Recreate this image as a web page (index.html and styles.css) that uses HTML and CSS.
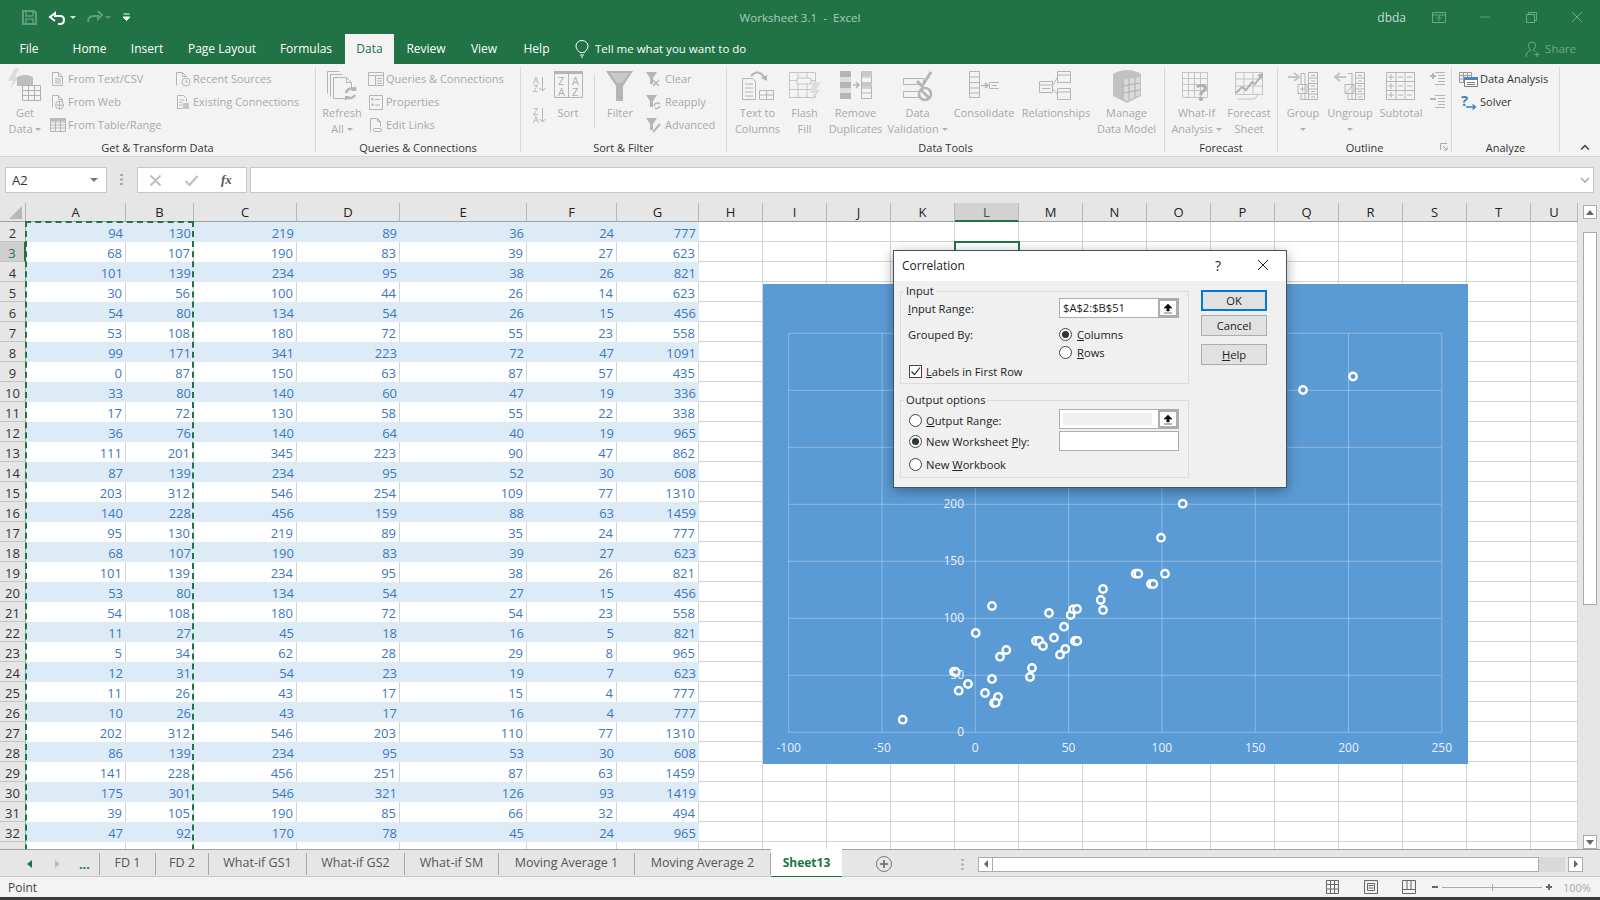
FILE: index.html
```html
<!DOCTYPE html>
<html lang="en">
<head>
  <meta charset="UTF-8">
  <title>Worksheet 3.1 - Excel</title>
  <link rel="stylesheet" href="styles.css">
</head>
<body>
  <div class="app">
    <div class="titlebar">
      <svg class="qat" width="140" height="34" viewBox="0 0 140 34">
        <g fill="none" stroke="#5f9d7c" stroke-width="2">
          <path d="M23 11h11l2 2v11H23z"/><path d="M26 11v5h7v-5M26 24v-5h7v5" stroke-width="1.5"/>
        </g>
        <path d="M52 13v-0M55 21l-5-4 5-4v3h5q4 0 4 4t-4 4h-2" fill="none" stroke="#fff" stroke-width="2"/>
        <path d="M70 16h6l-3 3z" fill="#d5e5dc"/>
        <path d="M98 11l4 4-4 4v-3h-4q-6 0-6 6" fill="none" stroke="#5f9d7c" stroke-width="2"/>
        <path d="M105 16h6l-3 3z" fill="#5f9d7c"/>
        <path d="M123.5 14h6M123 17h7l-3.500 3.500z" fill="#fff" stroke="#fff"/>
      </svg>
      <div class="doc-title">Worksheet 3.1 &nbsp;-&nbsp; Excel</div>
      <div class="window-side">
        <span class="user">dbda</span>
        <span class="winbtn"><svg width="14" height="11"><path d="M.5.5h13v10H.5zM.5 3h13M7 9V4.500M5 6.500l2-2 2 2" fill="none" stroke="#6ea88a"/></svg></span>
        <span class="winbtn"><svg width="12" height="3"><path d="M1 1h10" stroke="#5f9d7c"/></svg></span>
        <span class="winbtn"><svg width="11" height="11"><path d="M.5 2.500h8v8h-8zM2.500 2.500v-2h8v8h-2" fill="none" stroke="#6ea88a"/></svg></span>
        <span class="winbtn"><svg width="12" height="12"><path d="M1 1l10 10M11 1L1 11" stroke="#6ea88a"/></svg></span>
      </div>
    </div>

    <nav class="menutabs">
      <span>File</span><span>Home</span><span>Insert</span><span>Page Layout</span>
      <span class="formulas">Formulas</span><span class="on">Data</span><span>Review</span><span>View</span><span>Help</span>
      <span class="tellme">
        <svg width="14" height="18" viewBox="0 0 14 18"><path d="M4.500 12.500C3 10 1 9 1 6a6 5.500 0 0 1 12 0c0 3-2 4-3.500 6.500zM5 15h4M6 17h2" fill="none" stroke="#fff"/></svg>
        Tell me what you want to do
      </span>
      <span class="share">
        <svg width="16" height="18" viewBox="0 0 16 18"><path d="M1 17c0-4 2-6 5-7-2-1-2.500-3-2.500-4.500a3.500 3.500 0 0 1 7 0c0 1.500-.5 3.500-2.500 4.500 1 .3 2 1 2.500 1.500M12 12v5M9.500 14.500h5" fill="none" stroke="#6ea88a"/></svg>
        Share
      </span>
    </nav>

    <div class="ribbon">
      <section class="group g-get">
        <div class="body">
          <div class="big">
            <svg width="34" height="36" viewBox="0 0 34 36">
              <path d="M7 0L0 13h5l-3 8 9-12H7l4-9z" fill="#dcdcdc"/>
              <path d="M9 9q8-4 16 0v9H9z" fill="#bdbdbd"/>
              <path d="M14.500 17.500h18v15h-18zM14.500 22.500h18M14.500 27.500h18M20.500 17.500v15M26.500 17.500v15" fill="#f3f3f3" stroke="#b0b0b0"/>
            </svg>
            <span>Get</span><span>Data <i class="caret"></i></span>
          </div>
          <div class="stack">
            <div class="small"><svg width="16" height="16"><path d="M2.500 1.500h6l4 4v9h-10zM8.500 1.500v4h4M5 8h6M5 10h6M5 12h6" fill="none" stroke="#b5b5b5"/></svg>From Text/CSV</div>
            <div class="small"><svg width="16" height="16"><path d="M2.500 13.500v-12h6l4 4v2M8.500 1.500v4h4" fill="none" stroke="#b5b5b5"/><circle cx="9.500" cy="11" r="4" fill="#f3f3f3" stroke="#b5b5b5"/><path d="M5.500 11h8M9.500 7v8" stroke="#b5b5b5"/></svg>From Web</div>
            <div class="small"><svg width="16" height="16"><path d="M.5 1.500h15v13H.5zM.5 5h15M.5 8h15M.5 11h15M5.500 1.500v13M10.500 1.500v13" fill="none" stroke="#b5b5b5"/><path d="M.5 1.500h15v2.500H.5z" fill="#bdbdbd"/></svg>From Table/Range</div>
          </div>
          <div class="stack wide-icon">
            <div class="small"><svg width="18" height="16"><path d="M2.500 14.500v-13h6l4 4M8.500 1.500v4h4" fill="none" stroke="#b5b5b5"/><circle cx="12" cy="11" r="4" fill="#f3f3f3" stroke="#b5b5b5"/><path d="M12 8.500V11h2" fill="none" stroke="#b5b5b5"/></svg>Recent Sources</div>
            <div class="small"><svg width="18" height="16"><path d="M3.500 1.500h6l3 3v3M3.500 1.500v13h5M5.500 6h5M5.500 8.500h3M5.500 11h3" fill="none" stroke="#b5b5b5"/><path d="M9 9h6v6H9z" fill="#c6c6c6"/></svg>Existing Connections</div>
          </div>
        </div>
        <div class="label">Get &amp; Transform Data</div>
      </section>

      <section class="group g-queries">
        <div class="body">
          <div class="big">
            <svg width="30" height="36" viewBox="0 0 30 36">
              <path d="M.5 3.500h12M.5 3.500v22M3.500 6.500h12M3.500 6.500v22M6.500 9.500h13l5 5v7M6.500 9.500v21h12M19.500 9.500v5h5" fill="none" stroke="#b5b5b5"/>
              <path d="M19 25a6 6 0 0 1 10-3M28 27a6 6 0 0 1-9 2" fill="none" stroke="#b5b5b5" stroke-width="2.500"/>
              <path d="M29 18v5h-5zM18 33v-5h5z" fill="#b5b5b5"/>
            </svg>
            <span>Refresh</span><span>All <i class="caret"></i></span>
          </div>
          <div class="stack">
            <div class="small"><svg width="16" height="16"><path d="M.5 1.500h15v13H.5zM.5 4.500h15M7.500 4.500v10M9 7.500h5M9 10h5M9 12.500h5" fill="none" stroke="#b5b5b5"/></svg>Queries &amp; Connections</div>
            <div class="small"><svg width="16" height="16"><path d="M1.500 1.500h13v14h-13zM7 5.500h5M7 11h5" fill="none" stroke="#b5b5b5"/><path d="M3.500 4h2v2.500h-2zM3.500 9.500h2V12h-2z" fill="#b5b5b5"/></svg>Properties</div>
            <div class="small"><svg width="16" height="16"><path d="M2.500 14.500v-13h7l3 3v5M9.500 1.500v3h3" fill="none" stroke="#b5b5b5"/><path d="M7 11.500h5a1.500 1.500 0 0 1 0 3H7a1.500 1.500 0 0 1 0-3z" fill="none" stroke="#b5b5b5"/></svg>Edit Links</div>
          </div>
        </div>
        <div class="label">Queries &amp; Connections</div>
      </section>

      <section class="group g-sort">
        <div class="body">
          <div class="sort-pair">
            <svg width="18" height="21"><text x="3" y="10" class="azs">A</text><text x="3" y="18" class="azs">Z</text><path d="M12.500 3v14M9.500 14l3 3 3-3" fill="none" stroke="#b5b5b5"/></svg>
            <svg width="18" height="21"><text x="3" y="10" class="azs">Z</text><text x="3" y="18" class="azs">A</text><path d="M12.500 3v14M9.500 14l3 3 3-3" fill="none" stroke="#b5b5b5"/></svg>
          </div>
          <div class="big">
            <svg width="29" height="36" viewBox="0 0 29 36">
              <path d="M.5 4.500h28v25H.5zM14.500 6v23" fill="none" stroke="#b5b5b5"/><path d="M0 3h29v3H0z" fill="#b5b5b5"/>
              <text x="4" y="17" class="azb">Z</text><text x="18" y="17" class="azb">A</text>
              <text x="4" y="28" class="azb">A</text><text x="18" y="28" class="azb">Z</text>
            </svg>
            <span>Sort</span>
          </div>
          <div class="vsep"></div>
          <div class="big">
            <svg width="28" height="36" viewBox="0 0 28 36"><path d="M0 3h27L17 18v15h-7V18z" fill="#b5b5b5"/><path d="M4 5h19l-7 10h-5z" fill="#c9c9c9"/></svg>
            <span>Filter</span>
          </div>
          <div class="stack narrow-icon">
            <div class="small"><svg width="18" height="16"><path d="M1 1h11L8 7v6H5V7z" fill="#b5b5b5"/><path d="M8 9l6 6M14 9l-6 6" stroke="#b5b5b5" stroke-width="1.500"/></svg>Clear</div>
            <div class="small"><svg width="18" height="16"><path d="M1 1h11L8 7v6H5V7z" fill="#b5b5b5"/><path d="M9 12a3.500 3.500 0 0 1 6-2M15 12a3.500 3.500 0 0 1-5 2" fill="none" stroke="#b5b5b5" stroke-width="1.500"/></svg>Reapply</div>
            <div class="small"><svg width="18" height="16"><path d="M1 1h11L8 7v6H5V7z" fill="#b5b5b5"/><path d="M15 7l-6 7-1 1" fill="none" stroke="#b5b5b5" stroke-width="2"/></svg>Advanced</div>
          </div>
        </div>
        <div class="label">Sort &amp; Filter</div>
      </section>

      <section class="group g-tools">
        <div class="body">
          <div class="big">
            <svg width="32" height="36" viewBox="0 0 32 36">
              <path d="M.5 10.500h10l3 3v18H.5zM3 16h8M3 20h8M3 24h8M3 28h8" fill="none" stroke="#b5b5b5"/>
              <path d="M17.500 22.500h14v9h-14zM17.500 27h14M24.500 22.500v9" fill="none" stroke="#b5b5b5"/>
              <path d="M9 8q7-8 14 2" fill="none" stroke="#b5b5b5" stroke-width="2"/><path d="M19 10l6 3 0-6z" fill="#b5b5b5"/>
            </svg>
            <span>Text to</span><span>Columns</span>
          </div>
          <div class="big">
            <svg width="32" height="36" viewBox="0 0 32 36">
              <path d="M.5 4.500h26v25H.5zM.5 12.500h26M.5 21.500h26M9 4.500v25M18 4.500v25" fill="none" stroke="#c4c4c4"/>
              <path d="M8 10h14v6H8z" fill="#f3f3f3" stroke="#c4c4c4"/>
              <path d="M24 14h8l-5 8h4l-9 12 3-9h-4z" fill="#dcdcdc"/>
            </svg>
            <span>Flash</span><span>Fill</span>
          </div>
          <div class="big">
            <svg width="32" height="36" viewBox="0 0 32 36">
              <path d="M0 3h11v28H0z" fill="#b5b5b5"/><path d="M0 9h11v5H0zM0 20h11v5H0z" fill="#ddd"/>
              <path d="M21.500 3.500h10v27h-10zM21.500 9h10M21.500 14.500h10M21.500 20h10M21.500 25h10" fill="#f3f3f3" stroke="#b5b5b5"/>
              <path d="M22 3h10v5H22zM22 14h10v5H22z" fill="#c9c9c9"/>
              <path d="M13 17h6M16 14l3 3-3 3" fill="none" stroke="#b5b5b5" stroke-width="1.500"/>
            </svg>
            <span>Remove</span><span>Duplicates</span>
          </div>
          <div class="big">
            <svg width="30" height="36" viewBox="0 0 30 36">
              <path d="M.5 10.500h20v6H.5zM.5 23.500h20v6H.5z" fill="#f3f3f3" stroke="#b5b5b5"/>
              <path d="M14 13l5 5 9-14" fill="none" stroke="#b5b5b5" stroke-width="3"/>
              <circle cx="22" cy="26" r="6" fill="#f3f3f3" stroke="#b5b5b5" stroke-width="2.500"/><path d="M18 22l8 8" stroke="#b5b5b5" stroke-width="2.500"/>
            </svg>
            <span>Data</span><span>Validation <i class="caret"></i></span>
          </div>
          <div class="big">
            <svg width="30" height="36" viewBox="0 0 30 36">
              <path d="M.5 3.500h10v26h-10zM.5 9h10M.5 14.500h10M.5 20h10M.5 25h10M20.500 14.500h10v6h-10zM23 17.500h5" fill="none" stroke="#b5b5b5"/>
              <path d="M12 17.500h6M16 15l3 2.500-3 2.500" fill="none" stroke="#b5b5b5" stroke-width="1.500"/>
            </svg>
            <span>Consolidate</span>
          </div>
          <div class="big">
            <svg width="34" height="36" viewBox="0 0 34 36">
              <path d="M.5 13.500h13v11H.5zM.5 17h13M3 20.500h8" fill="#f3f3f3" stroke="#b5b5b5"/>
              <path d="M18.500 3.500h13v11h-13zM18.500 7h13M18.500 20.500h13v11h-13zM18.500 24h13" fill="#f3f3f3" stroke="#b5b5b5"/>
              <path d="M14 17l4-7M14 21l4 5" stroke="#b5b5b5"/>
            </svg>
            <span>Relationships</span>
          </div>
          <div class="big">
            <svg width="30" height="36" viewBox="0 0 30 36">
              <path d="M1 6q14-8 28 0v22l-14 7L1 28z" fill="#c2c2c2"/>
              <path d="M11 12l17-3v18l-13 6-4-2z" fill="#dadada"/>
              <path d="M11 12v19M17 11v21M23 10v20M11 18l17-3M11 25l17-3" fill="none" stroke="#b0b0b0"/>
            </svg>
            <span>Manage</span><span>Data Model</span>
          </div>
        </div>
        <div class="label">Data Tools</div>
      </section>

      <section class="group g-forecast">
        <div class="body">
          <div class="big">
            <svg class="tall" width="30" height="40" viewBox="0 0 30 40">
              <path d="M.5 4.500h25v25H.5zM.5 10.500h25M.5 16.500h25M.5 22.500h25M6.500 4.500v25M12.500 4.500v25M18.500 4.500v25" fill="none" stroke="#c4c4c4"/>
              <text x="14" y="33" class="whatif">?</text>
            </svg>
            <span>What-If</span><span>Analysis <i class="caret"></i></span>
          </div>
          <div class="big">
            <svg width="30" height="36" viewBox="0 0 30 36">
              <path d="M1.500 4.500h27v22h-27zM1.500 11h27M1.500 18h27M10 4.500v22M19 4.500v22" fill="none" stroke="#c4c4c4"/>
              <path d="M2 25l6-6 4 3 6-8 3 2 6-8" fill="none" stroke="#b0b0b0" stroke-width="2"/><path d="M23 7l6-2-1 6z" fill="#b0b0b0"/>
              <path d="M3 31h18l3-5" fill="none" stroke="#c4c4c4"/>
            </svg>
            <span>Forecast</span><span>Sheet</span>
          </div>
        </div>
        <div class="label">Forecast</div>
      </section>

      <section class="group g-outline">
        <div class="body">
          <div class="big">
            <svg width="32" height="36" viewBox="0 0 32 36">
              <path d="M1 9h10M7 5l5 4-5 4" fill="none" stroke="#c4c4c4" stroke-width="2"/>
              <path d="M11 16.500h9v9h-9zM15.500 18.500v5M13 21h5M14 5.500h4v26h4M14 5.500v11M14 25.500v6h4" fill="none" stroke="#b5b5b5"/>
              <path d="M21.500 4.500h9v27h-9zM21.500 10h9M21.500 15.500h9M21.500 21h9M21.500 26h9M24 7.500h4M24 13h4M24 18h4M24 23.500h4M24 29h4" fill="none" stroke="#b5b5b5"/>
            </svg>
            <span>Group</span><span><i class="caret"></i></span>
          </div>
          <div class="big">
            <svg width="32" height="36" viewBox="0 0 32 36">
              <path d="M2 9h10M6 5L1 9l5 4" fill="none" stroke="#c4c4c4" stroke-width="2"/>
              <path d="M11 16.500h9v9h-9zM12 25l7-8M14 5.500h4v26h4M14 25.500v6h4" fill="none" stroke="#b5b5b5"/>
              <path d="M21.500 4.500h9v27h-9zM21.500 10h9M21.500 15.500h9M21.500 21h9M21.500 26h9M24 7.500h4M24 13h4M24 18h4M24 23.500h4M24 29h4" fill="none" stroke="#b5b5b5"/>
            </svg>
            <span>Ungroup</span><span><i class="caret"></i></span>
          </div>
          <div class="big">
            <svg width="30" height="36" viewBox="0 0 30 36">
              <path d="M.5 4.500h28v27H.5zM.5 13.500h28M.5 22.500h28M10 4.500v27M19 4.500v27" fill="#f5f3f5" stroke="#b5b5b5"/>
              <path d="M2 9h6M5 6v6M2 18h6M5 15v6M2 27h6M5 24v6M12 9h5M21 9h5M12 18h5M21 18h5M12 27h5M21 27h5" stroke="#b5b5b5"/>
            </svg>
            <span>Subtotal</span>
          </div>
          <div class="detail">
            <svg width="16" height="16"><path d="M5 2.500h10M8 5.500h7M8 8.500h7M8 11.500h7M5 14.500h10" stroke="#b5b5b5"/><path d="M0 6h6M3 3v6" stroke="#b5b5b5" stroke-width="2"/></svg>
            <svg width="16" height="16"><path d="M5 2.500h10M8 5.500h7M8 8.500h7M8 11.500h7M5 14.500h10" stroke="#b5b5b5"/><path d="M0 6h6" stroke="#b5b5b5" stroke-width="2"/></svg>
          </div>
        </div>
        <div class="label">Outline</div>
        <svg class="launcher" width="8" height="8"><path d="M.5 7V.5H7M3 3l4 4M7 4v3H4" fill="none" stroke="#a8a8a8"/></svg>
      </section>

      <section class="group g-analyze">
        <div class="body">
          <div class="stack">
            <div class="small active"><svg width="19" height="16"><path d="M.5 1.500h12v10H.5zM.5 4.500h12M4.500 1.500v10M8.500 1.500v10M.5 8h12" fill="none" stroke="#9a9a9a"/><path d="M5.500 6.500h13v9h-13z" fill="#fff" stroke="#7a7a7a"/><path d="M5 6h14v3H5z" fill="#4a86c5"/><path d="M8 11.500h8M8 13.500h8" stroke="#7a7a7a"/></svg>Data Analysis</div>
            <div class="small active"><svg width="19" height="16"><text x="2" y="12" class="solver">?</text><path d="M7 13h9M13.500 10.500l3 2.500-3 2.500" fill="none" stroke="#3d7ec0" stroke-width="1.300"/></svg>Solver</div>
          </div>
        </div>
        <div class="label">Analyze</div>
      </section>
      <svg class="collapse" width="10" height="6"><path d="M1 5.500l4-4 4 4" fill="none" stroke="#444" stroke-width="1.500"/></svg>
    </div>

    <div class="formulabar">
      <div class="namebox">A2<i class="caret dark"></i></div>
      <svg class="grip" width="3" height="11"><path d="M0 0h3v2H0zM0 4.500h3v2H0zM0 9h3v2H0z" fill="#a8a8a8"/></svg>
      <div class="fxbox">
        <svg width="13" height="13"><path d="M1.500 1.500l10 10M11.500 1.500l-10 10" stroke="#bdbdbd" stroke-width="1.800"/></svg>
        <svg width="15" height="13"><path d="M1.500 7l4 4 8-9" fill="none" stroke="#bdbdbd" stroke-width="2"/></svg>
        <span class="fx">fx</span>
      </div>
      <div class="formula">
        <svg width="10" height="6"><path d="M1 1l4 4 4-4" fill="none" stroke="#a8a8a8" stroke-width="1.500"/></svg>
      </div>
    </div>

    <div class="sheetwrap">
      <div class="sheet">
        <div class="grid" id="grid"></div>
        <div class="ants"></div>
        <div class="activecell"></div>

        <svg class="chart" width="705" height="480" viewBox="763 284 705 480">
          <rect x="763" y="284" width="705" height="480" fill="#5b9bd5"/>
          <g id="gridlines" stroke="#fff" stroke-opacity=".3"></g>
          <g id="points" fill="#5b9bd5" stroke="#fff" stroke-width="2.400"></g>
          <g id="labels" class="chart-labels"></g>
        </svg>

        <div class="dialog">
          <div class="dlg-title">
            <span class="dlg-name">Correlation</span>
            <span class="dlg-q">?</span>
            <svg width="12" height="12"><path d="M1 1l10 10M11 1L1 11" stroke="#222"/></svg>
          </div>
          <div class="dlg-body">
            <div class="dlg-left">
              <fieldset class="fs fs-input">
                <legend>Input</legend>
                <div class="drow first">
                  <span class="dlabel"><u>I</u>nput Range:</span>
                  <span class="refbox"><span class="reftext">$A$2:$B$51</span><span class="refbtn"><svg width="10" height="11"><path d="M5 1l4 4H6.200v3H3.800V5H1zM1 10h8" fill="#111" stroke="#111" stroke-width=".6"/></svg></span></span>
                </div>
                <div class="drow">
                  <span class="dlabel">Grouped By:</span>
                  <span class="radio on"></span><span class="rtext"><u>C</u>olumns</span>
                </div>
                <div class="drow">
                  <span class="dlabel"></span>
                  <span class="radio"></span><span class="rtext"><u>R</u>ows</span>
                </div>
                <div class="drow labels">
                  <span class="check"><svg width="11" height="11"><path d="M1.500 5.500l3 3 5.500-7" fill="none" stroke="#333" stroke-width="1.200"/></svg></span>
                  <span class="rtext"><u>L</u>abels in First Row</span>
                </div>
              </fieldset>
              <fieldset class="fs fs-output">
                <legend>Output options</legend>
                <div class="orow">
                  <span class="olabel lower"><span class="radio"></span><span class="rtext"><u>O</u>utput Range:</span></span>
                  <span class="refbox"><span class="refoff"></span><span class="refbtn"><svg width="10" height="11"><path d="M5 1l4 4H6.200v3H3.800V5H1zM1 10h8" fill="#111" stroke="#111" stroke-width=".6"/></svg></span></span>
                </div>
                <div class="orow">
                  <span class="olabel"><span class="radio on"></span><span class="rtext">New Worksheet <u>P</u>ly:</span></span>
                  <span class="refbox plain"></span>
                </div>
                <div class="orow last">
                  <span class="olabel"><span class="radio"></span><span class="rtext">New <u>W</u>orkbook</span></span>
                </div>
              </fieldset>
            </div>
            <div class="dlg-buttons">
              <div class="dbtn ok">OK</div>
              <div class="dbtn">Cancel</div>
              <div class="dbtn help"><u>H</u>elp</div>
            </div>
          </div>
        </div>
      </div>
      <div class="vscroll">
        <div class="sbtn"><svg width="8" height="5"><path d="M4 0l4 5H0z" fill="#666"/></svg></div>
        <div class="vthumb"></div>
        <div class="sbtn down"><svg width="8" height="5"><path d="M4 5l4-5H0z" fill="#666"/></svg></div>
      </div>
    </div>

    <div class="tabsbar">
      <div class="tabnav">
        <svg width="5" height="8"><path d="M5 0v8L0 4z" fill="#217346"/></svg>
        <svg width="5" height="8"><path d="M0 0v8l5-4z" fill="#bbb"/></svg>
        <span>...</span>
      </div>
      <div class="tab">FD 1</div>
      <div class="tab">FD 2</div>
      <div class="tab">What-if GS1</div>
      <div class="tab">What-if GS2</div>
      <div class="tab">What-if SM</div>
      <div class="tab">Moving Average 1</div>
      <div class="tab">Moving Average 2</div>
      <div class="tab active">Sheet13</div>
      <div class="addsheet"><svg width="16" height="16"><circle cx="8" cy="8" r="7.500" fill="none" stroke="#7a7a7a"/><path d="M8 4v8M4 8h8" stroke="#666" stroke-width="1.600"/></svg></div>
      <svg class="grip" width="3" height="11"><path d="M0 0h3v2H0zM0 4.500h3v2H0zM0 9h3v2H0z" fill="#b5b5b5"/></svg>
      <div class="hscroll">
        <div class="hbtn"><svg width="4" height="8"><path d="M4 0v8L0 4z" fill="#666"/></svg></div>
        <div class="hthumb"></div>
        <div class="htrack"></div>
        <div class="hbtn"><svg width="4" height="8"><path d="M0 0v8l4-4z" fill="#666"/></svg></div>
      </div>
    </div>

    <div class="statusbar">
      <span class="mode">Point</span>
      <svg class="views" width="92" height="14" viewBox="0 0 92 14">
        <path d="M.5.500h12v13H.5zM.5 4.500h12M.5 9h12M4.500.5v13M8.500.5v13" fill="none" stroke="#666"/>
        <path d="M38.500.5h13v13h-13zM41.500 3.500h7v7h-7zM42.500 5.500h5M42.500 8h5" fill="none" stroke="#666"/>
        <path d="M76.500.5h13v13h-13zM76.500 9.500h13M81 .5v9M85 .5v9" fill="none" stroke="#666"/>
      </svg>
      <div class="zoomer">
        <span class="zm"></span>
        <span class="ztrack"><span class="ztick"></span></span>
        <span class="zp"></span>
      </div>
      <span class="zoomval">100%</span>
    </div>
    <div class="band"></div>
  </div>
  <script src="script.js"></script>
</body>
</html>
```

FILE: styles.css
```css
html, body {
  margin: 0;
  height: 100%;
  overflow: hidden;
}
body {
  font-family: "Open Sans", "Noto Sans", sans-serif;
  font-size: 11px;
  color: #222;
  background: #e6e6e6;
}
svg {
  display: block;
  flex: none;
}
.app {
  width: 1600px;
  height: 900px;
  display: flex;
  flex-direction: column;
}

/* title bar */
.titlebar {
  height: 34px;
  background: #217346;
  display: grid;
  grid-template-columns: 1fr auto 1fr;
  align-items: center;
}
.doc-title {
  color: #a9ccb9;
  font-size: 11.600px;
}
.window-side {
  display: flex;
  justify-content: flex-end;
  align-items: center;
  height: 34px;
}
.user {
  color: #c4dccf;
  font-size: 12px;
  margin-right: 10px;
}
.winbtn {
  width: 46px;
  display: flex;
  justify-content: center;
}

/* menu tabs */
.menutabs {
  height: 30px;
  background: #217346;
  color: #fff;
  font-size: 12px;
  display: grid;
  grid-template-columns: 58px 63px 52px 98px 74px 49px 64px 52px 53px auto 1fr;
  align-items: center;
}
.menutabs > span {
  text-align: center;
  line-height: 30px;
}
.menutabs .formulas {
  padding-right: 4px;
}
.menutabs .on {
  background: #f3f3f3;
  color: #217346;
}
.menutabs .tellme {
  display: flex;
  align-items: center;
  gap: 6px;
  margin-left: 12px;
  font-size: 11.500px;
}
.menutabs .share {
  display: flex;
  align-items: center;
  justify-content: flex-end;
  gap: 4px;
  padding-right: 24px;
  color: #6ea88a;
  font-size: 11.500px;
}

/* ribbon */
.ribbon {
  height: 93px;
  box-sizing: border-box;
  background: #f3f3f3;
  border-bottom: 1px solid #d4d4d4;
  padding-top: 3px;
  display: flex;
  position: relative;
  color: #a9a9a9;
}
.group {
  height: 85px;
  box-sizing: border-box;
  border-right: 1px solid #d8d8d8;
  position: relative;
}
.body {
  height: 73px;
  display: grid;
  justify-items: start;
}
.label {
  height: 12px;
  line-height: 16px;
  text-align: center;
  color: #333;
}
.g-get { width: 316px; }
.g-get .body { grid-template-columns: 50px 124px 1fr; }
.g-queries { width: 205px; }
.g-queries .body { grid-template-columns: 52px 1fr; }
.g-sort { width: 206px; }
.g-sort .body { grid-template-columns: 28px 38px 14px 38px 1fr; }
.g-tools { width: 438px; }
.g-tools .body { grid-template-columns: 61px 33px 69px 55px 78px 66px 75px; }
.g-forecast { width: 113px; }
.g-forecast .body { grid-template-columns: 63px 42px; }
.g-outline { width: 174px; }
.g-outline .body { grid-template-columns: 50px 44px 58px 22px; }
.g-analyze { width: 108px; }
.g-analyze .body { grid-template-columns: 1fr; padding-left: 7px; box-sizing: border-box; }

.big {
  justify-self: stretch;
  display: flex;
  flex-direction: column;
  align-items: center;
  line-height: 16px;
  white-space: nowrap;
}
.big svg {
  margin-top: 1px;
  margin-bottom: 1px;
}
.big svg.tall {
  margin-bottom: -3px;
}
.big span {
  display: block;
  height: 16px;
}
.stack {
  display: flex;
  flex-direction: column;
}
.small {
  height: 23px;
  display: flex;
  align-items: center;
  gap: 2px;
  white-space: nowrap;
}
.small.active {
  color: #333;
}
.wide-icon .small { gap: 1px; }
.narrow-icon { padding-left: 6px; }
.caret {
  display: inline-block;
  border: 3px solid transparent;
  border-top: 3px solid #b0b0b0;
  border-bottom: 0;
  vertical-align: 2px;
}
.caret.dark {
  border-width: 4px 4px 0;
  border-top-color: #777;
  position: absolute;
  right: 8px;
  top: 10px;
}
.sort-pair {
  padding: 7px 0 0 9px;
  display: flex;
  flex-direction: column;
  gap: 10px;
}
.azs {
  font-size: 9px;
  fill: #b0b0b0;
}
.azb {
  font-size: 11px;
  fill: #b0b0b0;
}
.whatif {
  font-size: 24px;
  font-weight: 700;
  fill: #b0b0b0;
}
.solver {
  font-size: 15px;
  font-weight: 700;
  fill: #3d7ec0;
}
.vsep {
  justify-self: center;
  width: 1px;
  height: 55px;
  margin-top: 7px;
  background: #d8d8d8;
}
.detail {
  display: flex;
  flex-direction: column;
  gap: 7px;
  padding: 3px 0 0 0;
}
.launcher {
  position: absolute;
  right: 3px;
  bottom: 1px;
}
.collapse {
  position: absolute;
  right: 10px;
  top: 80px;
}

/* formula bar */
.formulabar {
  height: 46px;
  box-sizing: border-box;
  padding: 10px 6px 10px 5px;
  display: flex;
  align-items: stretch;
  background: #e6e6e6;
}
.namebox, .fxbox, .formula {
  height: 26px;
  box-sizing: border-box;
  background: #fff;
  border: 1px solid #c8c8c8;
}
.namebox {
  width: 102px;
  padding-left: 6px;
  font-size: 13px;
  line-height: 24px;
  color: #333;
  position: relative;
}
.formulabar .grip {
  margin: 7px 14px 0 13px;
}
.fxbox {
  width: 110px;
  display: flex;
  align-items: center;
  gap: 22px;
  padding-left: 11px;
}
.fx {
  font-family: "Liberation Serif", serif;
  font-style: italic;
  font-weight: 700;
  font-size: 13px;
  color: #555;
}
.formula {
  flex: 1;
  margin-left: 3px;
  display: flex;
  align-items: center;
  justify-content: flex-end;
  padding-right: 3px;
}

/* sheet */
.sheetwrap {
  height: 646px;
  display: flex;
}
.sheet {
  width: 1578px;
  height: 646px;
  overflow: hidden;
  position: relative;
  background: #fff;
}
.grid {
  display: grid;
  grid-template-columns: 26px 100px 68px 103px 103px 127px 90px 82px repeat(13, 64px) 47px;
  grid-auto-rows: 20px;
  grid-template-rows: 19px;
  font-size: 13px;
}
.cell, .colhead, .rowhead, .corner {
  box-sizing: border-box;
  line-height: 23px;
}
.corner, .colhead {
  background: #e6e6e6;
  border-bottom: 1px solid #a0a0a0;
}
.corner {
  position: relative;
  border-right: 1px solid #b5b5b5;
}
.corner::after {
  content: "";
  position: absolute;
  right: 3px;
  bottom: 2px;
  border-style: solid;
  border-width: 0 0 13px 13px;
  border-color: transparent transparent #b8b8b8;
}
.colhead {
  text-align: center;
  color: #222;
  border-right: 1px solid #b8b8b8;
  line-height: 18px;
}
.colhead.sel {
  background: #d2d2d2;
  border-bottom: 2px solid #217346;
  color: #1f5f3c;
}
.rowhead {
  background: #e6e6e6;
  text-align: center;
  color: #333;
  border-bottom: 1px solid #c4c4c4;
  border-right: 1px solid #a8a8a8;
}
.rowhead.sel {
  background: #cfcfcf;
  border-right: 2px solid #217346;
  color: #217346;
}
.cell {
  text-align: right;
  padding-right: 3px;
  color: #3b78bd;
  border-right: 1px solid #d4d4d4;
}
.cell.blue {
  background: #ddebf7;
  border-right: 0;
}
.cell.empty {
  border-bottom: 1px solid #d4d4d4;
}
.ants {
  position: absolute;
  left: 25px;
  top: 18px;
  width: 169px;
  height: 700px;
  box-sizing: border-box;
  border: 2px dashed #217346;
}
.activecell {
  position: absolute;
  left: 954px;
  top: 38px;
  width: 66px;
  height: 22px;
  box-sizing: border-box;
  border: 2px solid #217346;
}

/* chart */
.chart {
  position: absolute;
  left: 763px;
  top: 81px;
}
.chart-labels text {
  font-size: 12px;
  fill: #eaf2fa;
}

/* dialog */
.dialog {
  position: absolute;
  left: 893px;
  top: 47px;
  width: 394px;
  height: 238px;
  box-sizing: border-box;
  background: #f0f0f0;
  border: 1px solid #3f5468;
  box-shadow: 0 3px 12px rgba(0, 0, 0, .35);
  font-size: 11.200px;
  color: #222;
}
.dlg-title {
  height: 30px;
  background: #fff;
  display: flex;
  align-items: center;
  padding: 0 17px 2px 8px;
  box-sizing: border-box;
}
.dlg-name {
  flex: 1;
  font-size: 12px;
}
.dlg-q {
  font-size: 14px;
  margin-right: 36px;
}
.dlg-body {
  display: flex;
  padding: 3px 0 0 6px;
  gap: 12px;
}
.dlg-left {
  width: 289px;
}
.fs {
  margin: 0;
  padding: 0 0 0 7px;
  border: 1px solid #dcdcdc;
  box-sizing: border-box;
  width: 289px;
}
.fs legend {
  padding: 0 2px;
  margin-left: -4px;
  line-height: 14px;
}
.fs-input {
  height: 100px;
}
.fs-output {
  height: 85px;
  margin-top: 9px;
}
.drow {
  display: flex;
  align-items: center;
  height: 18px;
}
.drow.first {
  height: 20px;
  margin-bottom: 7px;
}
.drow.labels {
  margin-top: 1px;
}
.dlabel {
  width: 151px;
  flex: none;
}
.radio {
  width: 13px;
  height: 13px;
  flex: none;
  box-sizing: border-box;
  border: 1px solid #444;
  border-radius: 50%;
  background: #fff;
  margin-right: 6px;
  position: relative;
}
.radio.on::after {
  content: "";
  position: absolute;
  left: 2px;
  top: 2px;
  width: 7px;
  height: 7px;
  border-radius: 50%;
  background: #333;
}
.drow .radio {
  margin-right: 5px;
}
.check {
  width: 13px;
  height: 13px;
  box-sizing: border-box;
  border: 1px solid #444;
  background: #fff;
  margin: 0 4px 0 1px;
  display: flex;
  align-items: center;
  justify-content: center;
}
.orow {
  display: flex;
  height: 20px;
  margin-top: 2px;
  align-items: center;
}
.orow.last {
  margin-top: 3px;
}
.olabel {
  width: 151px;
  flex: none;
  display: flex;
  align-items: center;
  padding-left: 1px;
  box-sizing: border-box;
}
.olabel .radio {
  margin-right: 4px;
}
.olabel.lower {
  padding-top: 2px;
}
.refbox {
  width: 120px;
  height: 20px;
  box-sizing: border-box;
  background: #fff;
  border: 1px solid #acacac;
  display: flex;
  align-items: stretch;
  justify-content: space-between;
}
.reftext {
  padding-left: 3px;
  line-height: 18px;
}
.refoff {
  width: 89px;
  margin: 3px 0 3px 3px;
  background: #f0f0f0;
}
.refbtn {
  width: 21px;
  margin: -1px -1px -1px 0;
  box-sizing: border-box;
  border: 3px solid #adadad;
  border-left-width: 2px;
  background: #fff;
  display: flex;
  align-items: center;
  justify-content: center;
}
.dlg-buttons {
  width: 66px;
  padding-top: 6px;
}
.dbtn {
  height: 21px;
  box-sizing: border-box;
  background: #e1e1e1;
  border: 1px solid #adadad;
  text-align: center;
  line-height: 19px;
  margin-bottom: 4px;
}
.dbtn.ok {
  border: 2px solid #0078d7;
  line-height: 17px;
}
.dbtn.help {
  margin-top: 8px;
}

/* vertical scrollbar */
.vscroll {
  width: 22px;
  box-sizing: border-box;
  background: #e6e6e6;
  padding: 2px 3px 0 5px;
  display: flex;
  flex-direction: column;
  height: 646px;
}
.sbtn {
  height: 14px;
  box-sizing: border-box;
  background: #fff;
  border: 1px solid #ababab;
  display: flex;
  align-items: center;
  justify-content: center;
}
.vthumb {
  height: 373px;
  margin-top: 13px;
  background: #fff;
  border: 1px solid #ababab;
  box-sizing: border-box;
}
.vscroll .down {
  margin-top: auto;
}

/* sheet tabs */
.tabsbar {
  height: 28px;
  box-sizing: border-box;
  background: #e6e6e6;
  border-top: 1px solid #a0a0a0;
  border-bottom: 1px solid #c8c8c8;
  display: grid;
  grid-template-columns: 100px 56px 53px 98px 98px 94px 136px 136px 71px 83px 53px 1fr;
  align-items: stretch;
  font-size: 12.500px;
}
.tabnav {
  display: flex;
  align-items: center;
  padding-left: 27px;
  gap: 23px;
  color: #217346;
  font-weight: 700;
  border-right: 1px solid #a8a8a8;
  margin: 3px 0;
}
.tabnav span {
  margin-left: -4px;
}
.tab {
  text-align: center;
  line-height: 26px;
  color: #555;
  white-space: nowrap;
}
.tab:not(.active) {
  border-right: 1px solid #a8a8a8;
  line-height: 20px;
  margin: 3px 0;
}
.tab.active {
  background: #fff;
  color: #217346;
  font-weight: 700;
  font-size: 12px;
  border-bottom: 2px solid #217346;
  margin-top: -1px;
  line-height: 27px;
}
.addsheet {
  display: flex;
  align-items: center;
  justify-content: center;
}
.tabsbar .grip {
  align-self: center;
  justify-self: end;
  margin-right: 14px;
}
.hscroll {
  display: flex;
  height: 15px;
  align-self: center;
  margin-right: 19px;
}
.hbtn {
  width: 15px;
  box-sizing: border-box;
  background: #fff;
  border: 1px solid #ababab;
  display: flex;
  align-items: center;
  justify-content: center;
}
.hthumb {
  width: 546px;
  background: #fff;
  border: 1px solid #ababab;
  border-left: 0;
  box-sizing: border-box;
}
.htrack {
  width: 26px;
  background: #d9d9d9;
  margin-right: 3px;
}

/* status bar */
.statusbar {
  height: 20px;
  background: #f3f3f3;
  display: flex;
  align-items: center;
  padding-left: 8px;
  font-size: 12px;
  color: #444;
}
.mode {
  width: 1318px;
}
.views {
  margin-right: 14px;
}
.zoomer {
  display: flex;
  align-items: center;
  gap: 3px;
}
.zm, .zp {
  width: 6px;
  height: 2px;
  background: #666;
  position: relative;
}
.zp::after {
  content: "";
  position: absolute;
  left: 2px;
  top: -2px;
  width: 2px;
  height: 6px;
  background: #666;
}
.ztrack {
  width: 100px;
  height: 1px;
  background: #aaa;
  margin: 0 1px;
  position: relative;
}
.ztick {
  position: absolute;
  left: 50px;
  top: -3px;
  width: 1px;
  height: 7px;
  background: #aaa;
}
.zoomval {
  margin-left: 11px;
  font-size: 11px;
  color: #a9a9a9;
}
.band {
  height: 3px;
  background: #3c3c3c;
}
```

FILE: script.js
```js
const rows = [
  [94, 130, 219, 89, 36, 24, 777],
  [68, 107, 190, 83, 39, 27, 623],
  [101, 139, 234, 95, 38, 26, 821],
  [30, 56, 100, 44, 26, 14, 623],
  [54, 80, 134, 54, 26, 15, 456],
  [53, 108, 180, 72, 55, 23, 558],
  [99, 171, 341, 223, 72, 47, 1091],
  [0, 87, 150, 63, 87, 57, 435],
  [33, 80, 140, 60, 47, 19, 336],
  [17, 72, 130, 58, 55, 22, 338],
  [36, 76, 140, 64, 40, 19, 965],
  [111, 201, 345, 223, 90, 47, 862],
  [87, 139, 234, 95, 52, 30, 608],
  [203, 312, 546, 254, 109, 77, 1310],
  [140, 228, 456, 159, 88, 63, 1459],
  [95, 130, 219, 89, 35, 24, 777],
  [68, 107, 190, 83, 39, 27, 623],
  [101, 139, 234, 95, 38, 26, 821],
  [53, 80, 134, 54, 27, 15, 456],
  [54, 108, 180, 72, 54, 23, 558],
  [11, 27, 45, 18, 16, 5, 821],
  [5, 34, 62, 28, 29, 8, 965],
  [12, 31, 54, 23, 19, 7, 623],
  [11, 26, 43, 17, 15, 4, 777],
  [10, 26, 43, 17, 16, 4, 777],
  [202, 312, 546, 203, 110, 77, 1310],
  [86, 139, 234, 95, 53, 30, 608],
  [141, 228, 456, 251, 87, 63, 1459],
  [175, 301, 546, 321, 126, 93, 1419],
  [39, 105, 190, 85, 66, 32, 494],
  [47, 92, 170, 78, 45, 24, 965]
];

const points = [
  [902.7, 719.7], [954, 671.7], [955.7, 672], [958.7, 690.7], [968, 684], [985, 693],
  [992, 679], [998, 697], [994, 703], [995.7, 702.7], [992, 606], [975.7, 633],
  [1000, 656.7], [1006.3, 650], [1032, 668], [1030, 677], [1036, 641], [1039.3, 641],
  [1043, 646], [1049, 613], [1054, 637.7], [1060, 654.7], [1065.3, 649], [1064, 626.7],
  [1070.7, 615], [1073.3, 609.3], [1077, 609], [1075, 641], [1077.3, 641], [1100.7, 600],
  [1103, 589], [1103, 610], [1135.7, 573.7], [1138.3, 573.7], [1151, 584], [1153.3, 584],
  [1165, 573.7], [1161, 537.7], [1182.7, 503.7], [1303, 390], [1353, 376.5]
];

const grid = document.getElementById('grid');
const columns = 'ABCDEFGHIJKLMNOPQRSTU'.split('');

function addCell(className, text) {
  const cell = document.createElement('div');
  cell.className = className;
  cell.textContent = text === undefined ? '' : text;
  grid.appendChild(cell);
}

addCell('corner');
columns.forEach(c => addCell(c === 'L' ? 'colhead sel' : 'colhead', c));

// the last row only peeks out under row 32, no number shows there
for (let r = 0; r < 32; r++) {
  const values = rows[r] || [];
  addCell(r === 1 ? 'rowhead sel' : 'rowhead', values.length ? r + 2 : '');
  columns.forEach((c, i) => {
    if (i < 7 && values.length) {
      addCell(r % 2 === 0 ? 'cell blue' : 'cell', values[i]);
    } else {
      addCell('cell empty');
    }
  });
}

// chart is drawn in page coordinates, see the viewBox in index.html
const SVG_NS = 'http://www.w3.org/2000/svg';

function svgEl(parent, name, attrs, text) {
  const el = document.createElementNS(SVG_NS, name);
  Object.keys(attrs).forEach(k => el.setAttribute(k, attrs[k]));
  if (text !== undefined) el.textContent = text;
  parent.appendChild(el);
}

const gridlines = document.getElementById('gridlines');
const labels = document.getElementById('labels');

for (let v = -100; v <= 250; v += 50) {
  const x = 975.3 + v * 1.866;
  svgEl(gridlines, 'line', { x1: x, x2: x, y1: 333.3, y2: 732.3 });
  svgEl(labels, 'text', { x: x, y: 752, 'text-anchor': 'middle' }, v);
}
for (let v = 0; v <= 350; v += 50) {
  const y = 732.3 - v * 1.14;
  svgEl(gridlines, 'line', { x1: 788.3, x2: 1441.3, y1: y, y2: y });
  // labels above 200 sit behind the dialog
  if (v <= 200) svgEl(labels, 'text', { x: 964, y: y + 4, 'text-anchor': 'end' }, v);
}

const pointLayer = document.getElementById('points');
points.forEach(p => svgEl(pointLayer, 'circle', { cx: p[0], cy: p[1], r: 3.7 }));
```
